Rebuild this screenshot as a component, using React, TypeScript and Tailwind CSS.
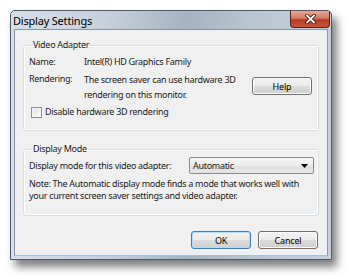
import React from 'react';

const font = { fontFamily: '"Noto Sans", "Open Sans", sans-serif' };

const VistaButton: React.FC<{ label: string; primary?: boolean }> = ({ label, primary }) => (
  <button
    className={`w-[60px] h-[18px] rounded-[3px] border text-[9px] tracking-[-0.2px] text-black leading-none bg-[linear-gradient(#f2f2f2_0%,#ebebeb_48%,#dddddd_52%,#cfcfcf_100%)] ${
      primary ? 'border-[#3c7fb1] shadow-[inset_0_0_0_1px_#a8e0f7]' : 'border-[#707070] shadow-[inset_0_0_0_1px_#fcfcfc]'
    }`}
  >
    {label}
  </button>
);

const GroupBox: React.FC<{ title: string; className?: string; children: React.ReactNode }> = ({ title, className, children }) => (
  <fieldset className={`mx-[8px] border border-[#d5dfe5] rounded-[3px] shadow-[inset_0_0_0_1px_#ffffff] pl-[5px] pr-[4px] ${className ?? ''}`}>
    <legend className="ml-[3px] px-[1px] leading-[12px]">{title}</legend>
    {children}
  </fieldset>
);

export default function App() {
  return (
    <div className="w-[350px] h-[279px] bg-white pl-[10px] pt-[10px] overflow-hidden" style={font}>
      {/* Window */}
      <div className="w-[322px] h-[250px] flex flex-col rounded-t-[5px] bg-[linear-gradient(90deg,#d8dfe7_0%,#c6d0db_30%,#a6b3c1_55%,#b9c5d1_75%,#c6d0db_100%)] border border-[#4b5a6a] shadow-[5px_7px_9px_rgba(0,0,0,0.5)]">
        {/* Title bar */}
        <div className="h-[18px] flex items-start justify-between shrink-0">
          <span className="pl-[2px] pt-[3px] text-[11px] tracking-[-0.2px] leading-[14px] text-black">Display Settings</span>
          <button className="mr-[1px] w-[40px] h-[17px] rounded-b-[4px] border border-t-0 border-[#5b1d14] bg-[linear-gradient(#e8a898_0%,#d37a66_45%,#b83a20_55%,#c9553a_100%)] flex items-center justify-center">
            <svg width="11" height="10" viewBox="0 0 11 10">
              <path d="M2 1.5 L9 8.5 M9 1.5 L2 8.5" stroke="#3a1208" strokeWidth="3.4" strokeLinecap="square" />
              <path d="M2 1.5 L9 8.5 M9 1.5 L2 8.5" stroke="#ffffff" strokeWidth="1.8" strokeLinecap="square" />
            </svg>
          </button>
        </div>

        {/* Client area */}
        <div className="flex-1 mx-[3px] mb-[3px] bg-[#f0f0f0] border border-[#8797a8] border-b-[#9cc0e6] flex flex-col text-[9px] tracking-[-0.3px] leading-[12px] text-[#1a1a1a] whitespace-nowrap">
          <GroupBox title="Video Adapter" className="mt-[9px] h-[92px]">
            <div className="flex flex-col">
              <div className="flex h-[14px] items-center mt-[4px]">
                <span className="w-[55px]">Name:</span>
                <span>Intel(R) HD Graphics Family</span>
              </div>
              <div className="flex mt-[3px]">
                <span className="w-[55px] pt-[1px]">Rendering:</span>
                <span className="leading-[15px]">
                  The screen saver can use hardware 3D
                  <br />
                  rendering on this monitor.
                </span>
                <div className="ml-auto mr-[2px] mt-[5px]">
                  <VistaButton label="Help" />
                </div>
              </div>
              <label className="flex items-center gap-[3px] mt-[4px] ml-[2px]">
                <span className="w-[11px] h-[11px] border border-[#8f8f8f] bg-[linear-gradient(135deg,#dcdcdc,#ffffff)] shadow-[inset_0_0_0_1px_#f4f4f4]" />
                <span>Disable hardware 3D rendering</span>
              </label>
            </div>
          </GroupBox>

          <GroupBox title="Display Mode" className="mt-[12px] h-[73px]">
            <div className="flex items-center mt-[2px]">
              <span>Display mode for this video adapter:</span>
              <div className="ml-auto w-[125px] h-[17px] rounded-[2px] border border-[#8a8a8a] bg-[linear-gradient(#f6f6f6_0%,#ececec_50%,#e0e0e0_51%,#e6e6e6_100%)] flex items-center justify-between pl-[3px] pr-[5px]">
                <span>Automatic</span>
                <svg width="7" height="4" viewBox="0 0 7 4">
                  <path d="M0 0 H7 L3.5 4 Z" fill="#000" />
                </svg>
              </div>
            </div>
            <p className="mt-[4px] leading-[12px]">
              Note: The Automatic display mode finds a mode that works well with
              <br />
              your current screen saver settings and video adapter.
            </p>
          </GroupBox>

          <div className="flex justify-end gap-[7px] mt-auto mb-[6px] mr-[9px]">
            <VistaButton label="OK" primary />
            <VistaButton label="Cancel" />
          </div>
        </div>
      </div>
    </div>
  );
}
